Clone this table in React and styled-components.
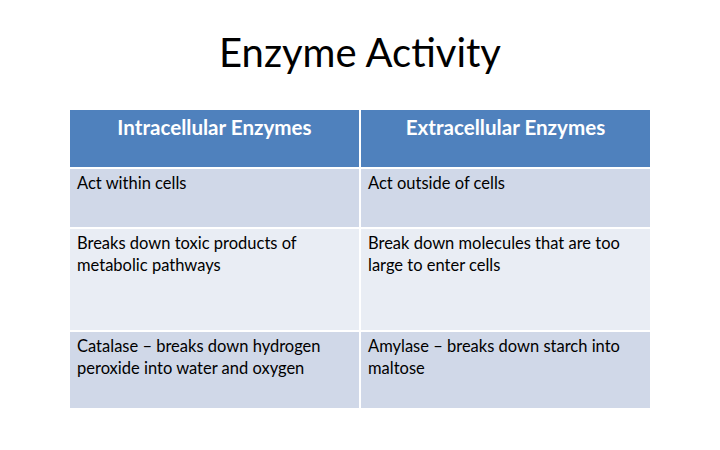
import React from "react";
import styled, { createGlobalStyle } from "styled-components";

const GlobalStyle = createGlobalStyle`
  body {
    margin: 0;
    background: #ffffff;
    font-family: "Lato", "Liberation Sans", sans-serif;
  }
`;

const Slide = styled.div`
  width: 720px;
  height: 450px;
  background: #ffffff;
  overflow: hidden;
`;

const Title = styled.h1`
  margin: 0;
  padding-top: 29px;
  height: 80px;
  box-sizing: border-box;
  text-align: center;
  font-weight: 400;
  font-size: 40px;
  line-height: 46px;
  color: #000000;
`;

const Table = styled.div`
  margin-left: 70px;
  margin-top: 30px;
  width: 580px;
  display: grid;
  grid-template-columns: 289px 289px;
  grid-template-rows: 57px 58px 101px 76px;
  gap: 2px;
`;

const HeadCell = styled.div`
  background: #4f81bd;
  color: #ffffff;
  text-align: center;
  font-size: 20.6px;
  font-weight: 700;
  line-height: 22px;
  padding-top: 6px;
`;

const Cell = styled.div`
  background: ${(p) => (p.$shade ? "#d0d8e8" : "#e9edf4")};
  color: #000000;
  font-size: 16.5px;
  line-height: 22px;
  padding: 3px 16px 0 7px;
`;

const rows = [
  ["Act within cells", "Act outside of cells"],
  [
    "Breaks down toxic products of metabolic pathways",
    "Break down molecules that are too large to enter cells",
  ],
  [
    "Catalase – breaks down hydrogen peroxide into water and oxygen",
    "Amylase – breaks down starch into maltose",
  ],
];

const App = () => {
  return (
    <Slide>
      <GlobalStyle />
      <Title>Enzyme Activity</Title>
      <Table>
        <HeadCell>Intracellular Enzymes</HeadCell>
        <HeadCell>Extracellular Enzymes</HeadCell>
        {rows.map((row, i) =>
          row.map((text, j) => (
            <Cell key={`${i}-${j}`} $shade={i % 2 === 0}>
              {text}
            </Cell>
          ))
        )}
      </Table>
    </Slide>
  );
};

export default App;
